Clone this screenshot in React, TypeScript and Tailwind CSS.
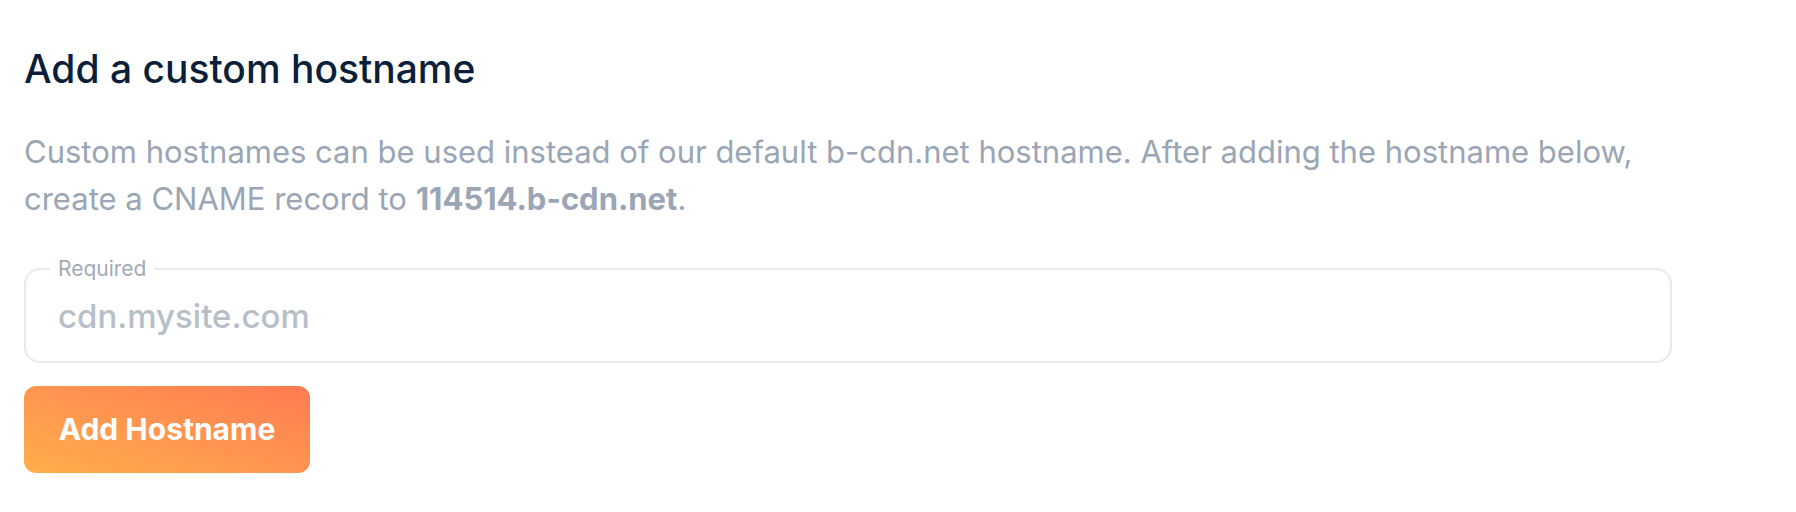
export default function App() {
  return (
    <div className="min-h-screen bg-white font-['Inter',sans-serif]">
      <div className="pl-6 pt-[46px] pr-[124px]">
        <h1 className="text-[39px] leading-[46px] font-medium text-[#0b1f3a]">
          Add a custom hostname
        </h1>
        <p className="mt-[36px] text-[31px] leading-[47px] text-[#9aa5b5] whitespace-nowrap">
          Custom hostnames can be used instead of our default b-cdn.net hostname. After adding the hostname below,
          <br />
          create a CNAME record to <span className="font-bold">114514.b-cdn.net</span>.
        </p>
        <fieldset className="mt-[36px] border-2 border-[#e7e9ed] rounded-2xl pl-6 pr-6 pb-[26px]">
          <legend className="px-2 text-[21px] leading-[22px] text-[#a3aab5]">Required</legend>
          <input
            type="text"
            placeholder="cdn.mysite.com"
            className="w-full pl-2 pt-[17px] bg-transparent outline-none text-[33px] leading-[38px] font-medium placeholder:text-[#b8bec8] text-[#0b1f3a]"
          />
        </fieldset>
        <button className="mt-[23px] h-[87px] w-[286px] rounded-xl bg-gradient-to-tr from-[#ffae4b] to-[#ff7a52] text-white text-[30px] font-bold">
          Add Hostname
        </button>
      </div>
    </div>
  );
}
